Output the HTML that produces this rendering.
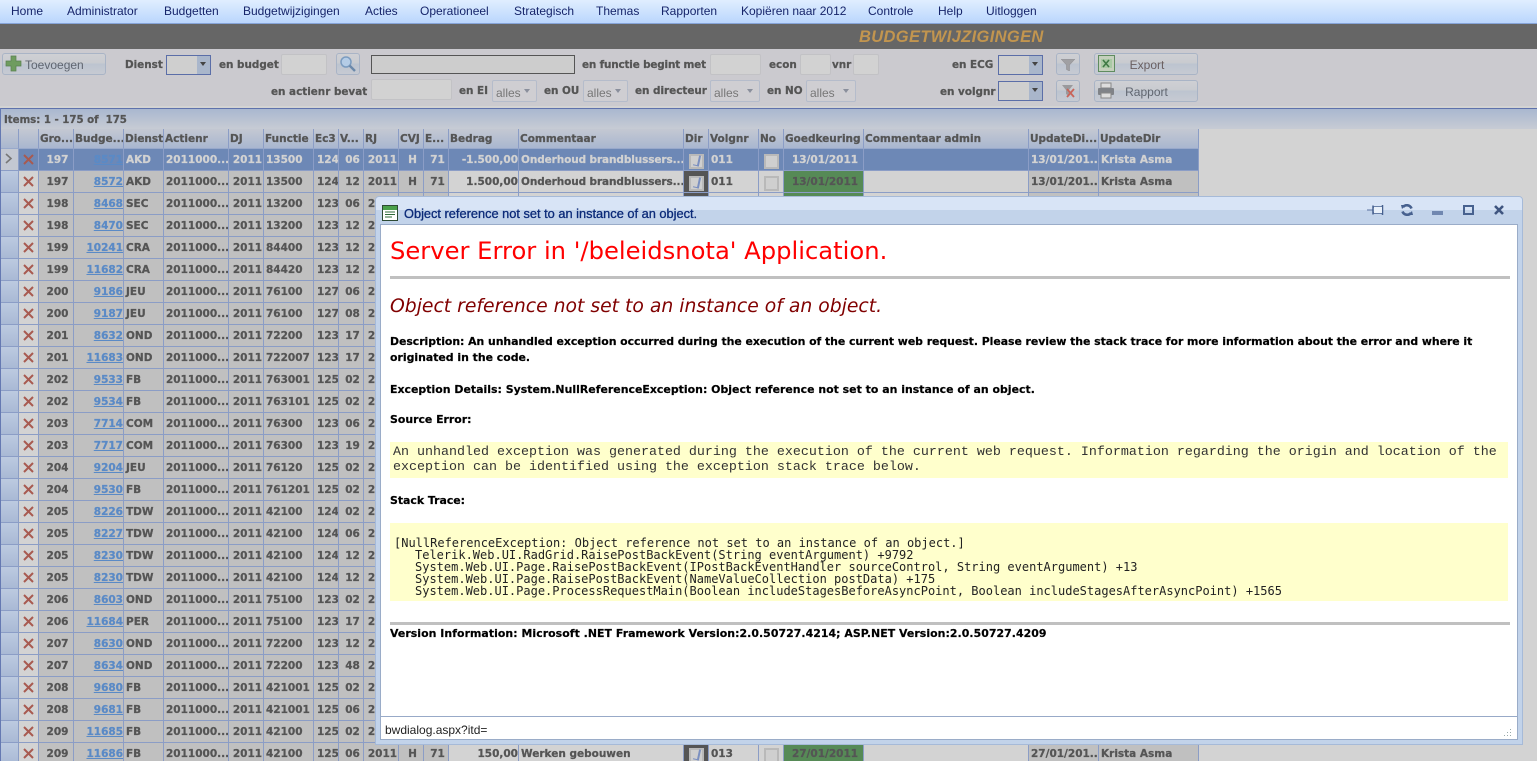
<!DOCTYPE html>
<html><head><meta charset="utf-8"><title>Budgetwijzigingen</title>
<style>
html,body{margin:0;padding:0;width:1537px;height:761px;overflow:hidden;background:#d3d3d3}
body{position:relative;font-family:"DejaVu Sans",sans-serif}
.a{position:absolute;white-space:nowrap}
#menu{left:0;top:0;width:1537px;height:23px;background:linear-gradient(#e0eeff,#bad6fd);border-bottom:1px solid #86a4d8}
#menu span{position:absolute;top:3px;font:12px/17px "Liberation Sans",sans-serif;color:#16246a}
#band{left:0;top:24px;width:1537px;height:25px;background:#666}
#ttl{left:859px;top:28px;font:italic bold 16.5px/18px "Liberation Sans",sans-serif;color:#c2954f;letter-spacing:.35px}
#tb{left:0;top:49px;width:1537px;height:57px;background:#cbcacf}
#tb2{left:0;top:106px;width:1537px;height:2px;background:#d3d3d3}
.l{font:bold 10.4px/14px "DejaVu Sans",sans-serif;color:#555;-webkit-text-stroke:.25px #555}
.in{background:#d2d2d2;border:1px solid #c2c2c5;border-radius:2px;box-sizing:border-box}
.sel{background:linear-gradient(90deg,#cfcfcf 0,#cfcfcf 30px,#a9b6cb 30px,#a9b6cb 100%);border:1px solid #5b6ea8;box-sizing:border-box;width:45px;height:20px}
.sel:after{content:"";position:absolute;right:4px;top:6px;border:3px solid transparent;border-top:4px solid #444}
.dd{background:#cfced2;border:1px solid #b5bccb;border-radius:2px;box-sizing:border-box;height:22px;font:12px/25px "Liberation Sans",sans-serif;color:#777;padding-left:3px}
.dd:after{content:"";position:absolute;right:6px;top:8px;border:3.5px solid transparent;border-top:4.5px solid #8a8f9c}
.btn{box-sizing:border-box;border:1px solid #a9b4c6;border-radius:3px;background:linear-gradient(#cfd0d4 0,#c9cbd0 45%,#bcc4d0 50%,#c6cad2 100%);font:12px/22px "Liberation Sans",sans-serif;color:#606670}
#gh{left:0;top:108px;width:1537px;height:21px;box-sizing:border-box;border-top:1px solid #5f72ac;background:linear-gradient(#a9b7d0,#c7cbd4);}
#gi{left:4px;top:114px;font:bold 10.2px/14px "DejaVu Sans",sans-serif;color:#555;-webkit-text-stroke:.25px #555}
#gl{left:0;top:108px;width:1px;height:653px;background:#6579b2}
table{position:absolute;left:1px;top:129px;border-collapse:separate;border-spacing:0;table-layout:fixed;width:1198px}
td,th{box-sizing:border-box;height:22px;padding:1px 0 0;border-right:1px solid #8b9dc6;border-bottom:1px solid #8b9dc6;font:bold 10.5px/20px "DejaVu Sans",sans-serif;color:#555;overflow:hidden;white-space:nowrap;background:#c0c0c0;text-align:left;-webkit-text-stroke:.25px currentColor;vertical-align:top}
th{height:20px;line-height:17px;background:linear-gradient(#c4c8d2,#a9b7d0);padding:2px 0 0 1px;border-bottom:1px solid #98a9cb}
td.i{background:linear-gradient(#bccae0,#a9b9d5)}
td.x{background:#d3d3d3;text-align:center}
td.x svg{display:block;margin:4px auto 0;width:11px;height:11px}
td.c{text-align:center;padding-left:3px}
td.r{text-align:right}
td.p{padding-left:2px}
td.t{padding-left:2px;letter-spacing:-.1px}
td.k{text-align:right}
td.k u{color:#5a8ac6}
td.g{background:#d3d3d3}
td.dk{background:#555;text-align:center}
td.gr{background:#568a56;text-align:center;padding-left:3px}
tr.s td{background:#6d88b6;color:#d2d2d2}
tr.s td.i{background:#c3c8d2}
tr.s td.x{background:#6d88b6}
tr.s td.k u{color:#5a8ac6}
.cb{display:block;width:15px;height:15px;margin:4px auto 0;border:2px solid #b9b9b9;background:#cfcfcf;box-sizing:border-box;position:relative}
.cb.v:after{content:"";position:absolute;left:3px;top:-1px;width:4px;height:10px;border-right:2px solid #7a8fc0;border-bottom:1px solid #7a8fc0;transform:rotate(12deg)}
#dlg{left:375px;top:196px;width:1148px;height:549px;box-sizing:border-box;border:1px solid #a6bad8;border-radius:4px 4px 0 0;background:#c2d3ea}
#dlgt{left:376px;top:197px;width:1146px;height:13px;background:#d8e4f6;border-radius:3px 3px 0 0}
#dlgc{left:380px;top:224px;width:1138px;height:516px;box-sizing:border-box;border:1px solid #9aacc8;background:#fff}
#dt{left:404px;top:205px;font:12.8px/17px "Liberation Sans",sans-serif;color:#0b2a78;-webkit-text-stroke:.3px #0b2a78}
.b{font:bold 10.9px/16px "DejaVu Sans",sans-serif;color:#000;-webkit-text-stroke:.2px #000}
.m{font:13.33px/15px "Liberation Mono",monospace;color:#333}
.n{font:12px/12px "DejaVu Sans Mono",monospace;color:#222}
.hr{background:#c0c0c0;left:390px;width:1120px;height:3px}
.y{background:#ffffcc;left:390px;width:1118px}
</style></head><body>
<div class="a" id="menu">
<span style="left:11px">Home</span><span style="left:67px">Administrator</span><span style="left:164px">Budgetten</span><span style="left:243px">Budgetwijzigingen</span><span style="left:365px">Acties</span><span style="left:420px">Operationeel</span><span style="left:514px">Strategisch</span><span style="left:596px">Themas</span><span style="left:661px">Rapporten</span><span style="left:741px">Kopiëren naar 2012</span><span style="left:868px">Controle</span><span style="left:938px">Help</span><span style="left:986px">Uitloggen</span>
</div>
<div class="a" id="band"></div><div class="a" id="ttl">BUDGETWIJZIGINGEN</div>
<div class="a" id="tb"></div><div class="a" id="tb2"></div>

<div class="a btn" style="left:2px;top:53px;width:104px;height:22px;padding-left:22px">Toevoegen</div>
<svg class="a" style="left:5px;top:55px" width="17" height="17" viewBox="0 0 17 17"><path d="M6 1h5v5h5v5h-5v5H6v-5H1V6h5z" fill="#6f9c5f" stroke="#5a8050" stroke-width=".7"/></svg>
<div class="a l" style="left:125px;top:58px">Dienst</div><div class="a sel" style="left:166px;top:55px"></div>
<div class="a l" style="left:219px;top:58px">en budget</div><div class="a in" style="left:281px;top:54px;width:46px;height:21px"></div>
<div class="a btn" style="left:336px;top:53px;width:24px;height:22px"></div>
<svg class="a" style="left:339px;top:55px" width="18" height="18" viewBox="0 0 18 18"><circle cx="7" cy="7" r="5" fill="#b4cce6" stroke="#7b9cc0" stroke-width="1.5"/><path d="M10.5 10.5L16 16" stroke="#6c89aa" stroke-width="2.4"/></svg>
<div class="a" style="left:371px;top:55px;width:204px;height:19px;box-sizing:border-box;border:1px solid #555;background:#cdcdcd"></div>
<div class="a l" style="left:582px;top:58px;letter-spacing:-.15px">en functie begint met</div><div class="a in" style="left:710px;top:54px;width:51px;height:21px"></div>
<div class="a l" style="left:769px;top:58px">econ</div><div class="a in" style="left:800px;top:54px;width:31px;height:21px"></div>
<div class="a l" style="left:832px;top:58px">vnr</div><div class="a in" style="left:853px;top:54px;width:26px;height:21px"></div>
<div class="a l" style="left:952px;top:58px">en ECG</div><div class="a sel" style="left:998px;top:55px"></div>
<div class="a btn" style="left:1056px;top:53px;width:24px;height:22px"></div>
<svg class="a" style="left:1061px;top:59px" width="14" height="12" viewBox="0 0 14 12"><path d="M0 0h14L8.500 6v6L5.500 10.500V6z" fill="#a0a0a3" stroke="#8a8a8d" stroke-width=".5"/></svg>
<div class="a btn" style="left:1094px;top:53px;width:104px;height:22px;text-align:center;padding-left:2px;color:#6a5f60">Export</div>
<svg class="a" style="left:1098px;top:55px" width="17" height="17" viewBox="0 0 17 17"><rect x=".5" y=".5" width="16" height="16" fill="#c4d0bc" stroke="#5f8c5f"/><path d="M3 4h11v9H3z" fill="#a9c9a4"/><path d="M5 5l6 7M11 5l-6 7" stroke="#3f7a45" stroke-width="1.6"/></svg>

<div class="a l" style="left:271px;top:85px">en actienr bevat</div><div class="a in" style="left:371px;top:79px;width:81px;height:21px"></div>
<div class="a l" style="left:459px;top:84px">en EI</div><div class="a dd" style="left:492px;top:80px;width:45px">alles</div>
<div class="a l" style="left:544px;top:84px">en OU</div><div class="a dd" style="left:583px;top:80px;width:45px">alles</div>
<div class="a l" style="left:635px;top:84px">en directeur</div><div class="a dd" style="left:710px;top:80px;width:50px">alles</div>
<div class="a l" style="left:767px;top:84px">en NO</div><div class="a dd" style="left:806px;top:80px;width:50px">alles</div>
<div class="a l" style="left:940px;top:85px">en volgnr</div><div class="a sel" style="left:998px;top:81px"></div>
<div class="a btn" style="left:1056px;top:80px;width:24px;height:22px"></div>
<svg class="a" style="left:1061px;top:85px" width="15" height="13" viewBox="0 0 15 13"><path d="M1 0h11L8 5v6L5 9V5z" fill="#9a9a9d"/><path d="M6 4l7 8M13 4l-7 8" stroke="#c8645a" stroke-width="1.8"/></svg>
<div class="a btn" style="left:1094px;top:80px;width:104px;height:22px;text-align:center;padding-left:1px">Rapport</div>
<svg class="a" style="left:1097px;top:82px" width="18" height="17" viewBox="0 0 18 17"><path d="M4 1h10v5H4z" fill="#ddd" stroke="#888"/><rect x="1" y="6" width="16" height="7" rx="1" fill="#808388"/><path d="M4 11h10v5H4z" fill="#ddd" stroke="#888"/></svg>

<div class="a" id="gh"></div><div class="a" id="gi">Items: 1 - 175 of &nbsp;175</div><div class="a" id="gl"></div>

<table>
<colgroup><col style="width:18px"><col style="width:20px"><col style="width:35px"><col style="width:50px"><col style="width:40px"><col style="width:65px"><col style="width:35px"><col style="width:50px"><col style="width:25px"><col style="width:25px"><col style="width:35px"><col style="width:25px"><col style="width:25px"><col style="width:70px"><col style="width:165px"><col style="width:25px"><col style="width:50px"><col style="width:25px"><col style="width:80px"><col style="width:165px"><col style="width:70px"><col style="width:100px"></colgroup>
<tr><th></th><th></th><th>Gro...</th><th>Budge...</th><th>Dienst</th><th>Actienr</th><th>DJ</th><th>Functie</th><th>Ec3</th><th>V...</th><th>RJ</th><th>CVJ</th><th>E...</th><th>Bedrag</th><th>Commentaar</th><th>Dir</th><th>Volgnr</th><th>No</th><th>Goedkeuring</th><th>Commentaar admin</th><th>UpdateDi...</th><th>UpdateDir</th></tr>
<tr class="s"><td class="i"><svg width="8" height="11" viewBox="0 0 8 11" style="display:block;margin:3px 0 0 4px"><path d="M1 1l5 4.5L1 10" fill="none" stroke="#777" stroke-width="1.6"/></svg></td><td class="x"><svg viewBox="0 0 11 11"><path d="M1 1l9 9M10 1l-9 9" stroke="#a85a50" stroke-width="2"/></svg></td><td class="c">197</td><td class="k"><u>8571</u></td><td class="p">AKD</td><td class="p">2011000...</td><td class="c">2011</td><td class="p">13500</td><td class="c">124</td><td class="c">06</td><td class="c">2011</td><td class="c">H</td><td class="c">71</td><td class="r">-1.500,00</td><td class="t">Onderhoud brandblussers...</td><td><span class="cb v"></span></td><td class="p">011</td><td><span class="cb"></span></td><td class="c">13/01/2011</td><td></td><td class="p">13/01/201...</td><td class="p">Krista Asma</td></tr>
<tr><td class="i"></td><td class="x"><svg viewBox="0 0 11 11"><path d="M1 1l9 9M10 1l-9 9" stroke="#a85a50" stroke-width="2"/></svg></td><td class="c">197</td><td class="k"><u>8572</u></td><td class="p">AKD</td><td class="p">2011000...</td><td class="c">2011</td><td class="p">13500</td><td class="c">124</td><td class="c">12</td><td class="c">2011</td><td class="c">H</td><td class="c">71</td><td class="r g">1.500,00</td><td class="t g">Onderhoud brandblussers...</td><td class="dk"><span class="cb v"></span></td><td class="p g">011</td><td class="g"><span class="cb"></span></td><td class="gr">13/01/2011</td><td class="g"></td><td class="p">13/01/201...</td><td class="p">Krista Asma</td></tr>
<tr><td class="i"></td><td class="x"><svg viewBox="0 0 11 11"><path d="M1 1l9 9M10 1l-9 9" stroke="#a85a50" stroke-width="2"/></svg></td><td class="c">198</td><td class="k"><u>8468</u></td><td class="p">SEC</td><td class="p">2011000...</td><td class="c">2011</td><td class="p">13200</td><td class="c">123</td><td class="c">06</td><td class="c">2011</td><td class="c"></td><td class="c"></td><td class="g"></td><td class="g"></td><td class="dk"></td><td class="g"></td><td class="g"></td><td class="gr"></td><td class="g"></td><td></td><td></td></tr>
<tr><td class="i"></td><td class="x"><svg viewBox="0 0 11 11"><path d="M1 1l9 9M10 1l-9 9" stroke="#a85a50" stroke-width="2"/></svg></td><td class="c">198</td><td class="k"><u>8470</u></td><td class="p">SEC</td><td class="p">2011000...</td><td class="c">2011</td><td class="p">13200</td><td class="c">123</td><td class="c">12</td><td class="c">2011</td></tr>
<tr><td class="i"></td><td class="x"><svg viewBox="0 0 11 11"><path d="M1 1l9 9M10 1l-9 9" stroke="#a85a50" stroke-width="2"/></svg></td><td class="c">199</td><td class="k"><u>10241</u></td><td class="p">CRA</td><td class="p">2011000...</td><td class="c">2011</td><td class="p">84400</td><td class="c">123</td><td class="c">12</td><td class="c">2011</td></tr>
<tr><td class="i"></td><td class="x"><svg viewBox="0 0 11 11"><path d="M1 1l9 9M10 1l-9 9" stroke="#a85a50" stroke-width="2"/></svg></td><td class="c">199</td><td class="k"><u>11682</u></td><td class="p">CRA</td><td class="p">2011000...</td><td class="c">2011</td><td class="p">84420</td><td class="c">123</td><td class="c">12</td><td class="c">2011</td></tr>
<tr><td class="i"></td><td class="x"><svg viewBox="0 0 11 11"><path d="M1 1l9 9M10 1l-9 9" stroke="#a85a50" stroke-width="2"/></svg></td><td class="c">200</td><td class="k"><u>9186</u></td><td class="p">JEU</td><td class="p">2011000...</td><td class="c">2011</td><td class="p">76100</td><td class="c">127</td><td class="c">06</td><td class="c">2011</td></tr>
<tr><td class="i"></td><td class="x"><svg viewBox="0 0 11 11"><path d="M1 1l9 9M10 1l-9 9" stroke="#a85a50" stroke-width="2"/></svg></td><td class="c">200</td><td class="k"><u>9187</u></td><td class="p">JEU</td><td class="p">2011000...</td><td class="c">2011</td><td class="p">76100</td><td class="c">127</td><td class="c">08</td><td class="c">2011</td></tr>
<tr><td class="i"></td><td class="x"><svg viewBox="0 0 11 11"><path d="M1 1l9 9M10 1l-9 9" stroke="#a85a50" stroke-width="2"/></svg></td><td class="c">201</td><td class="k"><u>8632</u></td><td class="p">OND</td><td class="p">2011000...</td><td class="c">2011</td><td class="p">72200</td><td class="c">123</td><td class="c">17</td><td class="c">2011</td></tr>
<tr><td class="i"></td><td class="x"><svg viewBox="0 0 11 11"><path d="M1 1l9 9M10 1l-9 9" stroke="#a85a50" stroke-width="2"/></svg></td><td class="c">201</td><td class="k"><u>11683</u></td><td class="p">OND</td><td class="p">2011000...</td><td class="c">2011</td><td class="p">722007</td><td class="c">123</td><td class="c">17</td><td class="c">2011</td></tr>
<tr><td class="i"></td><td class="x"><svg viewBox="0 0 11 11"><path d="M1 1l9 9M10 1l-9 9" stroke="#a85a50" stroke-width="2"/></svg></td><td class="c">202</td><td class="k"><u>9533</u></td><td class="p">FB</td><td class="p">2011000...</td><td class="c">2011</td><td class="p">763001</td><td class="c">125</td><td class="c">02</td><td class="c">2011</td></tr>
<tr><td class="i"></td><td class="x"><svg viewBox="0 0 11 11"><path d="M1 1l9 9M10 1l-9 9" stroke="#a85a50" stroke-width="2"/></svg></td><td class="c">202</td><td class="k"><u>9534</u></td><td class="p">FB</td><td class="p">2011000...</td><td class="c">2011</td><td class="p">763101</td><td class="c">125</td><td class="c">02</td><td class="c">2011</td></tr>
<tr><td class="i"></td><td class="x"><svg viewBox="0 0 11 11"><path d="M1 1l9 9M10 1l-9 9" stroke="#a85a50" stroke-width="2"/></svg></td><td class="c">203</td><td class="k"><u>7714</u></td><td class="p">COM</td><td class="p">2011000...</td><td class="c">2011</td><td class="p">76300</td><td class="c">123</td><td class="c">06</td><td class="c">2011</td></tr>
<tr><td class="i"></td><td class="x"><svg viewBox="0 0 11 11"><path d="M1 1l9 9M10 1l-9 9" stroke="#a85a50" stroke-width="2"/></svg></td><td class="c">203</td><td class="k"><u>7717</u></td><td class="p">COM</td><td class="p">2011000...</td><td class="c">2011</td><td class="p">76300</td><td class="c">123</td><td class="c">19</td><td class="c">2011</td></tr>
<tr><td class="i"></td><td class="x"><svg viewBox="0 0 11 11"><path d="M1 1l9 9M10 1l-9 9" stroke="#a85a50" stroke-width="2"/></svg></td><td class="c">204</td><td class="k"><u>9204</u></td><td class="p">JEU</td><td class="p">2011000...</td><td class="c">2011</td><td class="p">76120</td><td class="c">125</td><td class="c">02</td><td class="c">2011</td></tr>
<tr><td class="i"></td><td class="x"><svg viewBox="0 0 11 11"><path d="M1 1l9 9M10 1l-9 9" stroke="#a85a50" stroke-width="2"/></svg></td><td class="c">204</td><td class="k"><u>9530</u></td><td class="p">FB</td><td class="p">2011000...</td><td class="c">2011</td><td class="p">761201</td><td class="c">125</td><td class="c">02</td><td class="c">2011</td></tr>
<tr><td class="i"></td><td class="x"><svg viewBox="0 0 11 11"><path d="M1 1l9 9M10 1l-9 9" stroke="#a85a50" stroke-width="2"/></svg></td><td class="c">205</td><td class="k"><u>8226</u></td><td class="p">TDW</td><td class="p">2011000...</td><td class="c">2011</td><td class="p">42100</td><td class="c">124</td><td class="c">02</td><td class="c">2011</td></tr>
<tr><td class="i"></td><td class="x"><svg viewBox="0 0 11 11"><path d="M1 1l9 9M10 1l-9 9" stroke="#a85a50" stroke-width="2"/></svg></td><td class="c">205</td><td class="k"><u>8227</u></td><td class="p">TDW</td><td class="p">2011000...</td><td class="c">2011</td><td class="p">42100</td><td class="c">124</td><td class="c">06</td><td class="c">2011</td></tr>
<tr><td class="i"></td><td class="x"><svg viewBox="0 0 11 11"><path d="M1 1l9 9M10 1l-9 9" stroke="#a85a50" stroke-width="2"/></svg></td><td class="c">205</td><td class="k"><u>8230</u></td><td class="p">TDW</td><td class="p">2011000...</td><td class="c">2011</td><td class="p">42100</td><td class="c">124</td><td class="c">12</td><td class="c">2011</td></tr>
<tr><td class="i"></td><td class="x"><svg viewBox="0 0 11 11"><path d="M1 1l9 9M10 1l-9 9" stroke="#a85a50" stroke-width="2"/></svg></td><td class="c">205</td><td class="k"><u>8230</u></td><td class="p">TDW</td><td class="p">2011000...</td><td class="c">2011</td><td class="p">42100</td><td class="c">124</td><td class="c">12</td><td class="c">2011</td></tr>
<tr><td class="i"></td><td class="x"><svg viewBox="0 0 11 11"><path d="M1 1l9 9M10 1l-9 9" stroke="#a85a50" stroke-width="2"/></svg></td><td class="c">206</td><td class="k"><u>8603</u></td><td class="p">OND</td><td class="p">2011000...</td><td class="c">2011</td><td class="p">75100</td><td class="c">123</td><td class="c">02</td><td class="c">2011</td></tr>
<tr><td class="i"></td><td class="x"><svg viewBox="0 0 11 11"><path d="M1 1l9 9M10 1l-9 9" stroke="#a85a50" stroke-width="2"/></svg></td><td class="c">206</td><td class="k"><u>11684</u></td><td class="p">PER</td><td class="p">2011000...</td><td class="c">2011</td><td class="p">75100</td><td class="c">123</td><td class="c">17</td><td class="c">2011</td></tr>
<tr><td class="i"></td><td class="x"><svg viewBox="0 0 11 11"><path d="M1 1l9 9M10 1l-9 9" stroke="#a85a50" stroke-width="2"/></svg></td><td class="c">207</td><td class="k"><u>8630</u></td><td class="p">OND</td><td class="p">2011000...</td><td class="c">2011</td><td class="p">72200</td><td class="c">123</td><td class="c">12</td><td class="c">2011</td></tr>
<tr><td class="i"></td><td class="x"><svg viewBox="0 0 11 11"><path d="M1 1l9 9M10 1l-9 9" stroke="#a85a50" stroke-width="2"/></svg></td><td class="c">207</td><td class="k"><u>8634</u></td><td class="p">OND</td><td class="p">2011000...</td><td class="c">2011</td><td class="p">72200</td><td class="c">123</td><td class="c">48</td><td class="c">2011</td></tr>
<tr><td class="i"></td><td class="x"><svg viewBox="0 0 11 11"><path d="M1 1l9 9M10 1l-9 9" stroke="#a85a50" stroke-width="2"/></svg></td><td class="c">208</td><td class="k"><u>9680</u></td><td class="p">FB</td><td class="p">2011000...</td><td class="c">2011</td><td class="p">421001</td><td class="c">125</td><td class="c">02</td><td class="c">2011</td></tr>
<tr><td class="i"></td><td class="x"><svg viewBox="0 0 11 11"><path d="M1 1l9 9M10 1l-9 9" stroke="#a85a50" stroke-width="2"/></svg></td><td class="c">208</td><td class="k"><u>9681</u></td><td class="p">FB</td><td class="p">2011000...</td><td class="c">2011</td><td class="p">421001</td><td class="c">125</td><td class="c">06</td><td class="c">2011</td></tr>
<tr><td class="i"></td><td class="x"><svg viewBox="0 0 11 11"><path d="M1 1l9 9M10 1l-9 9" stroke="#a85a50" stroke-width="2"/></svg></td><td class="c">209</td><td class="k"><u>11685</u></td><td class="p">FB</td><td class="p">2011000...</td><td class="c">2011</td><td class="p">42100</td><td class="c">125</td><td class="c">02</td><td class="c">2011</td></tr>
<tr><td class="i"></td><td class="x"><svg viewBox="0 0 11 11"><path d="M1 1l9 9M10 1l-9 9" stroke="#a85a50" stroke-width="2"/></svg></td><td class="c">209</td><td class="k"><u>11686</u></td><td class="p">FB</td><td class="p">2011000...</td><td class="c">2011</td><td class="p">42100</td><td class="c">125</td><td class="c">06</td><td class="c">2011</td><td class="c">H</td><td class="c">71</td><td class="r g">150,00</td><td class="p g">Werken gebouwen</td><td class="dk"><span class="cb v"></span></td><td class="p g">013</td><td class="g"><span class="cb"></span></td><td class="gr">27/01/2011</td><td class="g"></td><td class="p">27/01/201...</td><td class="p">Krista Asma</td></tr>
</table>

<div class="a" id="dlg"></div><div class="a" id="dlgt"></div>
<svg class="a" style="left:382px;top:205px" width="17" height="16" viewBox="0 0 17 16"><rect x=".5" y=".5" width="15" height="15" fill="#fff" stroke="#2d4a34"/><rect x="1" y="1" width="14" height="4" fill="#4aa04a"/><path d="M3 7h10M3 9.500h10M3 12h7" stroke="#2d6a3a"/></svg>
<div class="a" id="dt">Object reference not set to an instance of an object.</div>
<svg class="a" style="left:1367px;top:204px" width="18" height="12" viewBox="0 0 18 12"><path d="M0 6h6" stroke="#5a72a0"/><path d="M6 1.500v9M15.500 1v10M6 3h10M6 9h10" stroke="#47618f" stroke-width="1.500" fill="none"/><rect x="7" y="3" width="8" height="6" fill="#e8f0fa"/></svg>
<svg class="a" style="left:1401px;top:204px" width="12" height="12" viewBox="0 0 12 12"><path d="M10.500 4.500A5 5 0 0 0 2 3M1.500 7.500A5 5 0 0 0 10 9" fill="none" stroke="#47618f" stroke-width="2.600"/><path d="M0 1l5 0-4 4zM12 11l-5 0 4-4z" fill="#47618f"/></svg>
<div class="a" style="left:1432px;top:211px;width:11px;height:4px;background:#7087b0"></div>
<div class="a" style="left:1463px;top:205px;width:11px;height:10px;box-sizing:border-box;border:2px solid #47618f"></div>
<svg class="a" style="left:1494px;top:205px" width="10" height="10" viewBox="0 0 10 10"><path d="M1 1l8 8M9 1l-8 8" stroke="#3f5580" stroke-width="2.600"/></svg>

<div class="a" id="dlgc"></div>
<div class="a" style="left:390px;top:236px;font:24.24px/30px 'DejaVu Sans',sans-serif;color:#f00">Server Error in '/beleidsnota' Application.</div>
<div class="a hr" style="top:276px"></div>
<div class="a" style="left:390px;top:295px;font:italic 18.8px/24px 'DejaVu Sans',sans-serif;color:#800000">Object reference not set to an instance of an object.</div>
<div class="a b" style="left:390px;top:334px;letter-spacing:-.035px">Description: An unhandled exception occurred during the execution of the current web request. Please review the stack trace for more information about the error and where it</div>
<div class="a b" style="left:390px;top:350px">originated in the code.</div>
<div class="a b" style="left:390px;top:382px;letter-spacing:.03px">Exception Details: System.NullReferenceException: Object reference not set to an instance of an object.</div>
<div class="a b" style="left:390px;top:412px">Source Error:</div>
<div class="a y" style="top:442px;height:36px"></div>
<div class="a m" style="left:393px;top:445px">An unhandled exception was generated during the execution of the current web request. Information regarding the origin and location of the</div>
<div class="a m" style="left:393px;top:460px">exception can be identified using the exception stack trace below.</div>
<div class="a b" style="left:390px;top:493px">Stack Trace:</div>
<div class="a y" style="top:523px;height:78px"></div>
<div class="a n" style="left:394px;top:537px">[NullReferenceException: Object reference not set to an instance of an object.]</div>
<div class="a n" style="left:415px;top:549px">Telerik.Web.UI.RadGrid.RaisePostBackEvent(String eventArgument) +9792</div>
<div class="a n" style="left:415px;top:561px">System.Web.UI.Page.RaisePostBackEvent(IPostBackEventHandler sourceControl, String eventArgument) +13</div>
<div class="a n" style="left:415px;top:573px">System.Web.UI.Page.RaisePostBackEvent(NameValueCollection postData) +175</div>
<div class="a n" style="left:415px;top:585px">System.Web.UI.Page.ProcessRequestMain(Boolean includeStagesBeforeAsyncPoint, Boolean includeStagesAfterAsyncPoint) +1565</div>
<div class="a hr" style="top:622px"></div>
<div class="a b" style="left:390px;top:626px;letter-spacing:.06px">Version Information: Microsoft .NET Framework Version:2.0.50727.4214; ASP.NET Version:2.0.50727.4209</div>
<div class="a" style="left:381px;top:716px;width:1136px;height:1px;background:#98aac8"></div>
<div class="a" style="left:385px;top:722px;font:12px/16px 'Liberation Sans',sans-serif;color:#222">bwdialog.aspx?itd=</div>
<svg class="a" style="left:1503px;top:728px" width="9" height="9" viewBox="0 0 9 9"><path d="M7 1h1v1H7zM4 4h1v1H4zM7 4h1v1H7zM1 7h1v1H1zM4 7h1v1H4zM7 7h1v1H7z" fill="#9aa"/></svg>
</body></html>
